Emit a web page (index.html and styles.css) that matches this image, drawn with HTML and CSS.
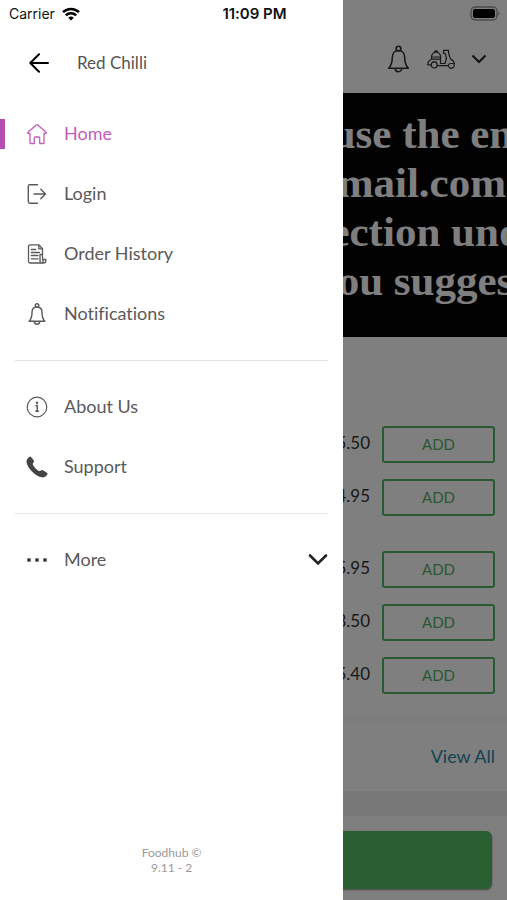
FILE: index.html
```html
<!DOCTYPE html>
<html lang="en">
<head>
<meta charset="utf-8">
<meta name="viewport" content="width=device-width, initial-scale=1">
<title>Red Chilli</title>
<link rel="stylesheet" href="styles.css">
</head>
<body>
<div class="screen">
  <div class="status">
    <div class="carrier">
      <span>Carrier</span>
      <svg width="18" height="14" viewBox="0 0 18 14" fill="none" stroke="#000" stroke-width="2.5">
        <path d="M1 5.2a11.3 11.3 0 0 1 16 0"/>
        <path d="M3.8 8.3a7.4 7.4 0 0 1 10.4 0"/>
        <path d="M6.2 10.8a4 4 0 0 1 5.6 0L9 13.6z" fill="#000" stroke="none"/>
      </svg>
    </div>
    <time class="clock">11:09 PM</time>
    <svg class="battery" width="30" height="15" viewBox="0 0 30 15">
      <rect x="1" y="1" width="26" height="13" rx="4" fill="none" stroke="#4b4b4b" stroke-width="1.3"/>
      <rect x="3" y="3" width="22" height="9" rx="2" fill="#000"/>
      <path d="M28.3 5.3a2.6 2.6 0 0 1 0 4.4z" fill="#4b4b4b"/>
    </svg>
  </div>

  <main class="page">
    <header class="topbar">
      <button class="icon-btn" aria-label="Notifications">
        <svg width="24" height="28" viewBox="0 0 24 28" fill="none" stroke="#333" stroke-width="1.6" stroke-linejoin="round">
          <circle cx="11.500" cy="3.600" r="2.400"/>
          <path d="M11.500 5.500C7.500 5.500 5.300 8.500 5.300 12.500C5.300 18 4.200 20.500 1.700 23.300H21.300C18.800 20.500 17.700 18 17.700 12.500C17.700 8.500 15.500 5.500 11.500 5.500Z"/>
          <path d="M8.200 23.500a3.300 3.200 0 0 0 6.600 0"/>
        </svg>
      </button>
      <button class="icon-btn" aria-label="Order type">
        <svg width="28" height="20" viewBox="0 0 28 20" fill="none" stroke="#333" stroke-width="1.2" stroke-linejoin="round" stroke-linecap="round">
          <path d="M4.500 8a4.600 4.800 0 0 1 9.200 0zM7.600 2.800a1.600 1.300 0 0 1 3 0"/>
          <path d="M4.500 8v2.200h9V8M4.500 10.200C2 11.200.8 13 .8 15.800H4M13.500 10.200v4.300h4.500l1.500-5.500-1.400-4.700h-1.500V1.300h5v3.200l2 5.600c2 .6 3.300 2 3.700 4.400h-3.300c-1.700 0-2.500.8-3 2.100H10.500M5 13h4.500"/>
          <circle cx="7.200" cy="16" r="3"/>
          <path d="M21.200 16.500a3 3 0 1 0 5.400-2"/>
        </svg>
      </button>
      <button class="icon-btn" aria-label="Show options">
        <svg width="16" height="10" viewBox="0 0 16 10" fill="none" stroke="#222" stroke-width="2"><path d="M1.500 1.500L8 8l6.500-6.500"/></svg>
      </button>
    </header>
    <section class="banner">
      <p class="banner-text">I use the entire<br>Gmail.com<br>flection under<br>'you suggest</p>
    </section>
    <section class="products">
      <ul class="group">
        <li class="product"><span class="price">£5.50</span><button class="add">ADD</button></li>
        <li class="product"><span class="price">£4.95</span><button class="add">ADD</button></li>
      </ul>
      <ul class="group">
        <li class="product"><span class="price">£5.95</span><button class="add">ADD</button></li>
        <li class="product"><span class="price">£3.50</span><button class="add">ADD</button></li>
        <li class="product"><span class="price">£5.40</span><button class="add">ADD</button></li>
      </ul>
    </section>
    <section class="reviews"><a class="view-all" href="#">View All</a></section>
    <footer class="order-bar"><button class="order" aria-label="Order now"></button></footer>
  </main>
  <div class="scrim"></div>

  <aside class="drawer">
    <header class="drawer-head">
      <button class="icon-btn" aria-label="Back">
        <svg width="20" height="20" viewBox="0 0 20 20" fill="none" stroke="#000" stroke-width="2" stroke-linecap="round" stroke-linejoin="round"><path d="M19 10H1.500M10 1.300L1.300 10l8.700 8.700"/></svg>
      </button>
      <h1 class="title">Red Chilli</h1>
    </header>
    <nav class="menu">
      <ul class="section">
        <li><a class="item active" href="#">
          <svg width="22" height="22" viewBox="0 0 22 22" fill="none" stroke="currentColor" stroke-width="1.300" stroke-linejoin="round"><path d="M4 10.500V19.700q0 .8.800.8H8.300V15q0-1 1-1h3.400q1 0 1 1v5.500h3.500q.8 0 .8-.8V10.500h1.500q1.300-.3.500-1.300L11.800 2q-.8-.7-1.600 0L2 9.200q-.8 1 .5 1.300z"/></svg>
          <span class="label">Home</span></a></li>
        <li><a class="item" href="#">
          <svg width="22" height="22" viewBox="0 0 22 22" fill="none" stroke="currentColor" stroke-width="1.400" stroke-linecap="round" stroke-linejoin="round"><path d="M11.500 1.800H4Q2.300 1.800 2.300 3.500V18.500Q2.300 20.200 4 20.200H11.500M8 11H19.500M14.800 6.300L19.500 11l-4.700 4.700"/></svg>
          <span class="label">Login</span></a></li>
        <li><a class="item" href="#">
          <svg width="22" height="22" viewBox="0 0 22 22" fill="none" stroke="currentColor" stroke-width="1.300" stroke-linecap="round" stroke-linejoin="round"><path d="M16.500 11V5.800L12.800 1.800H4Q2.500 1.800 2.500 3.300V18.500Q2.500 20 4 20H17.500Q19.800 20 19.800 18V16.500H16.500V11.500H14V18Q14 20 15.700 20T17 18V16.500M12.800 1.800V5.800H16.500M5.300 6.500H9.500M5.300 9.500H13.500M5.300 12.500H12M5.300 15.800H12"/></svg>
          <span class="label">Order History</span></a></li>
        <li><a class="item" href="#">
          <svg width="22" height="22" viewBox="0 0 22 22" fill="none" stroke="currentColor" stroke-width="1.400" stroke-linejoin="round"><circle cx="11" cy="2.500" r="1.800"/><path d="M11 4C7.600 4 6 6.500 6 9.500C6 14 5.200 16 3.200 18.300H18.800C16.800 16 16 14 16 9.500C16 6.500 14.400 4 11 4ZM8.300 18.500a2.700 2.700 0 0 0 5.400 0"/></svg>
          <span class="label">Notifications</span></a></li>
      </ul>
      <ul class="section">
        <li><a class="item" href="#">
          <svg width="22" height="22" viewBox="0 0 22 22" fill="none" stroke="currentColor"><circle cx="11" cy="11" r="9.800" stroke-width="1.200"/><path d="M9.500 9.500H11.200V15M9.300 15.200H13" stroke-width="1.500"/><circle cx="11" cy="6.700" r="1.200" fill="currentColor" stroke="none"/></svg>
          <span class="label">About Us</span></a></li>
        <li><a class="item" href="#">
          <svg width="22" height="22" viewBox="0 0 22 22" fill="#444"><path d="M3.200 1Q4.200.1 5.200 1.200L7.700 4.300Q8.500 5.400 7.500 6.500Q6.300 7.800 7 9Q9 12.800 12.300 14.800Q13.500 15.500 14.800 14.500Q16 13.700 17 14.300L20.800 16.700Q22.200 17.700 21.200 18.800Q19.700 21.300 16.800 21.500Q12.500 21.300 7.300 16.800Q1 11 .4 5.800Q.3 3 3.200 1Z"/></svg>
          <span class="label">Support</span></a></li>
      </ul>
      <ul class="section">
        <li><button class="item">
          <svg width="22" height="22" viewBox="0 0 22 22" fill="#444"><circle cx="3" cy="11" r="2"/><circle cx="11" cy="11" r="2"/><circle cx="19" cy="11" r="2"/></svg>
          <span class="label">More</span>
          <svg class="chevron" width="20" height="14" viewBox="0 0 20 14" fill="none" stroke="#222" stroke-width="2.600" stroke-linecap="round"><path d="M2 2.500l8 8 8-8"/></svg>
        </button></li>
      </ul>
    </nav>
    <footer class="version">Foodhub ©<br>9.11 - 2</footer>
  </aside>
</div>
</body>
</html>
```

FILE: styles.css
```css
* { box-sizing: border-box; }

body {
  margin: 0;
  font-family: Lato, "Liberation Sans", sans-serif;
  font-variant-ligatures: none;
  color: #555;
}

ul, p, h1 { margin: 0; padding: 0; }
ul { list-style: none; }
svg { display: block; flex: none; }
a { text-decoration: none; }

button {
  margin: 0;
  padding: 0;
  border: 0;
  background: none;
  font: inherit;
  color: inherit;
}

.screen {
  position: relative;
  min-height: 100vh;
  overflow: hidden;
}

.status {
  position: absolute;
  inset: 0 0 auto;
  z-index: 3;
  display: grid;
  grid-template-columns: 1fr auto 1fr;
  align-items: center;
  height: 27px;
  padding: 0 7px 0 9px;
  font-family: Inter, sans-serif;
  font-size: 14px;
  color: #111;
}

.carrier { display: flex; align-items: center; gap: 7px; }
.clock { font-size: 15px; font-weight: 600; }
.battery { justify-self: end; }

.page {
  display: flex;
  flex-direction: column;
  min-height: 100vh;
  background: #fff;
}

.topbar {
  display: flex;
  align-items: center;
  justify-content: flex-end;
  gap: 16px;
  height: 93px;
  padding: 25px 20px 0;
}

.banner {
  height: 244px;
  padding: 16px 0 0 60%;
  background: #040404;
  overflow: hidden;
}

.banner-text {
  font: bold 43px/49px "Liberation Serif", serif;
  color: #fff;
  white-space: nowrap;
}

.products {
  display: grid;
  gap: 35px;
  padding: 89px 12px 22px;
}

.group { display: grid; gap: 16px; }

.product {
  display: flex;
  justify-content: flex-end;
  gap: 12px;
}

.price {
  font-size: 17px;
  line-height: 33px;
  color: #333;
}

.add {
  width: 113px;
  height: 37px;
  padding-bottom: 2px;
  border: 2px solid #54b066;
  border-radius: 3px;
  font-size: 15px;
  color: #54b066;
}

.reviews {
  display: flex;
  align-items: center;
  justify-content: flex-end;
  height: 75px;
  padding: 0 12px;
  border-top: 5px solid #f8f8f8;
}

.view-all { font-size: 18px; color: #2a86ac; }

.order-bar {
  flex: 1;
  padding: 15px 15px 10px;
  border-top: 25px solid #f0f0f0;
}

.order {
  display: block;
  width: 100%;
  height: 58px;
  border-radius: 6px;
  background: #54be66;
  box-shadow: 0 1px 2px #888;
}

.scrim {
  position: absolute;
  inset: 0;
  z-index: 1;
  background: rgba(0, 0, 0, 0.5);
}

.drawer {
  position: absolute;
  inset: 0 auto 0 0;
  z-index: 2;
  display: flex;
  flex-direction: column;
  width: 67.7%;
  padding-top: 28px;
  background: #fff;
}

.drawer-head {
  display: flex;
  align-items: center;
  gap: 28px;
  height: 76px;
  padding: 0 29px 6px;
}

.title { padding-bottom: 2px; font-size: 17px; font-weight: 400; }

.section + .section {
  margin: 16px 15px 0;
  padding-top: 16px;
  border-top: 1px solid #e4e4e4;
}

.section + .section .item { padding: 0 0 0 11px; }

.item {
  display: flex;
  align-items: center;
  gap: 16px;
  width: 100%;
  height: 60px;
  padding: 0 26px;
  font-size: 18px;
  color: #5a5a5a;
}

.label { padding-bottom: 2px; }

.active {
  color: #c35cba;
  background: linear-gradient(#b64db0, #b64db0) left center / 5px 30px no-repeat;
}

.chevron { margin-left: auto; }

.version {
  margin-top: auto;
  padding-bottom: 25px;
  text-align: center;
  font-size: 12px;
  line-height: 15px;
  color: #999;
}
```
